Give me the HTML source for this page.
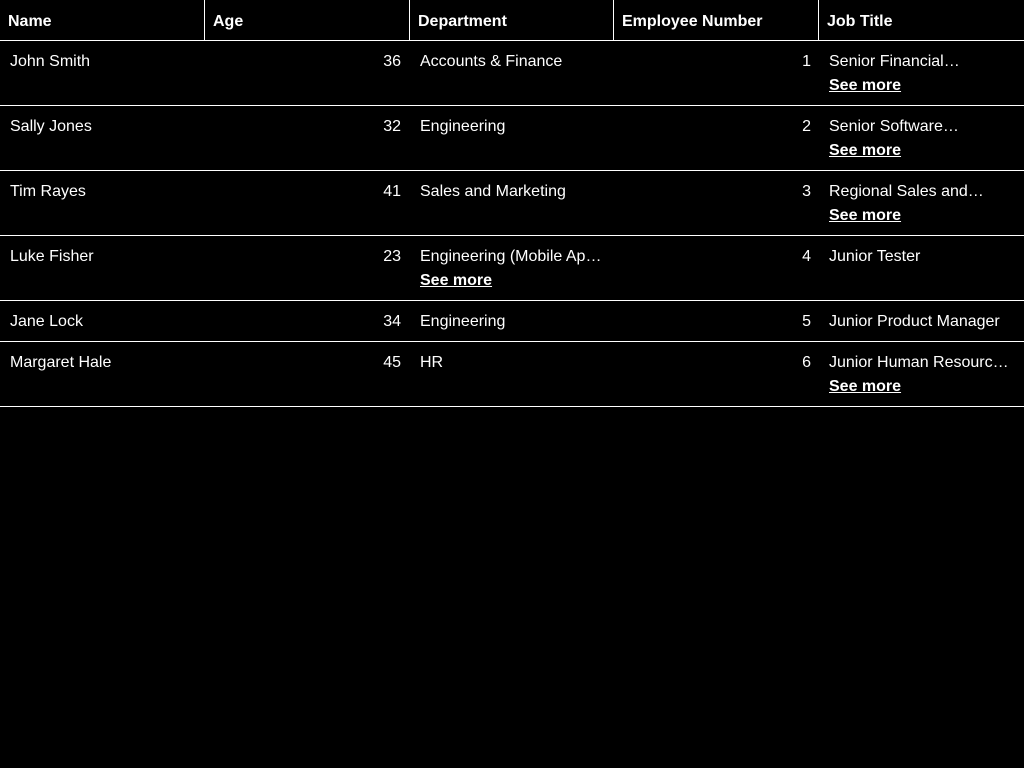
<!DOCTYPE html>
<html><head><meta charset="utf-8"><style>
*{margin:0;padding:0;box-sizing:border-box}
body{width:1024px;height:768px;background:#000;color:#fff;font-family:"Liberation Sans",sans-serif;font-size:16px;position:relative;overflow:hidden}
.h{position:absolute;top:2px;height:40px;line-height:40px;font-weight:bold;padding-left:8px}
.vl{position:absolute;top:0;width:1px;height:40px;background:#fff}
.hl{position:absolute;left:0;width:1024px;height:1px;background:#fff}
.t{position:absolute;white-space:nowrap;line-height:20px;margin-top:1px}
.r{text-align:right}
.s{font-weight:bold;text-decoration:underline}
</style></head><body>
<div class="h" style="left:0">Name</div>
<div class="h" style="left:205px">Age</div>
<div class="h" style="left:410px">Department</div>
<div class="h" style="left:614px">Employee Number</div>
<div class="h" style="left:819px">Job Title</div>
<div class="vl" style="left:204px"></div><div class="vl" style="left:409px"></div><div class="vl" style="left:613px"></div><div class="vl" style="left:818px"></div>
<div class="hl" style="top:40px"></div>
<div class="hl" style="top:105px"></div>
<div class="hl" style="top:170px"></div>
<div class="hl" style="top:235px"></div>
<div class="hl" style="top:300px"></div>
<div class="hl" style="top:341px"></div>
<div class="hl" style="top:406px"></div>

<div class="t" style="left:10px;top:51px">John Smith</div>
<div class="t r" style="left:300px;width:101px;top:51px">36</div>
<div class="t" style="left:420px;top:51px">Accounts &amp; Finance</div>
<div class="t r" style="left:700px;width:111px;top:51px">1</div>
<div class="t" style="left:829px;top:51px">Senior Financial…</div>
<div class="t s" style="left:829px;top:75px">See more</div>

<div class="t" style="left:10px;top:116px">Sally Jones</div>
<div class="t r" style="left:300px;width:101px;top:116px">32</div>
<div class="t" style="left:420px;top:116px">Engineering</div>
<div class="t r" style="left:700px;width:111px;top:116px">2</div>
<div class="t" style="left:829px;top:116px">Senior Software…</div>
<div class="t s" style="left:829px;top:140px">See more</div>

<div class="t" style="left:10px;top:181px">Tim Rayes</div>
<div class="t r" style="left:300px;width:101px;top:181px">41</div>
<div class="t" style="left:420px;top:181px">Sales and Marketing</div>
<div class="t r" style="left:700px;width:111px;top:181px">3</div>
<div class="t" style="left:829px;top:181px">Regional Sales and…</div>
<div class="t s" style="left:829px;top:205px">See more</div>

<div class="t" style="left:10px;top:246px">Luke Fisher</div>
<div class="t r" style="left:300px;width:101px;top:246px">23</div>
<div class="t" style="left:420px;top:246px">Engineering (Mobile Ap…</div>
<div class="t s" style="left:420px;top:270px">See more</div>
<div class="t r" style="left:700px;width:111px;top:246px">4</div>
<div class="t" style="left:829px;top:246px">Junior Tester</div>

<div class="t" style="left:10px;top:311px">Jane Lock</div>
<div class="t r" style="left:300px;width:101px;top:311px">34</div>
<div class="t" style="left:420px;top:311px">Engineering</div>
<div class="t r" style="left:700px;width:111px;top:311px">5</div>
<div class="t" style="left:829px;top:311px">Junior Product Manager</div>

<div class="t" style="left:10px;top:352px">Margaret Hale</div>
<div class="t r" style="left:300px;width:101px;top:352px">45</div>
<div class="t" style="left:420px;top:352px">HR</div>
<div class="t r" style="left:700px;width:111px;top:352px">6</div>
<div class="t" style="left:829px;top:352px">Junior Human Resourc…</div>
<div class="t s" style="left:829px;top:376px">See more</div>
</body></html>
